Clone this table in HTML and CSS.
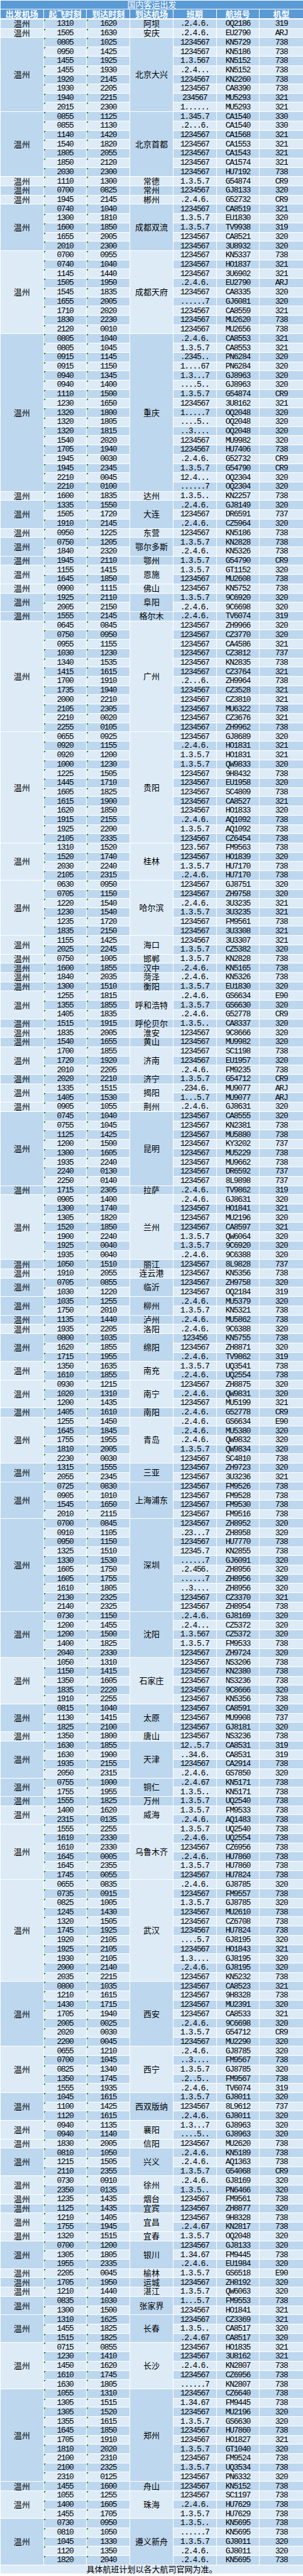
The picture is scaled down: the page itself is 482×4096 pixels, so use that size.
FILE: index.html
```html
<!DOCTYPE html>
<html lang="zh-CN">
<head>
<meta charset="utf-8">
<title>国内客运出发</title>
<link rel="stylesheet" href="styles.css">
</head>
<body>
<table class="sched">
<thead>
<tr class="title-row"><th colspan="7" class="title">国内客运出发</th></tr>
<tr class="head-row"><th>出发机场</th><th>起飞时刻</th><th>到达时刻</th><th>到达机场</th><th>班期</th><th>航班号</th><th>机型</th></tr>
</thead>
<tbody>
<tr class="g"><td>温州</td><td>1310</td><td>1620</td><td>阿坝</td><td>.2.4.6.</td><td>OQ2186</td><td>319</td></tr>
<tr class="g"><td>温州</td><td>1505</td><td>1630</td><td>安庆</td><td>.2.4.6.</td><td>EU2790</td><td>ARJ</td></tr>
<tr class="g"><td rowspan="8">温州</td><td>0805</td><td>1025</td><td rowspan="8">北京大兴</td><td>1234567</td><td>KN5729</td><td>738</td></tr>
<tr><td>0950</td><td>1425</td><td>1234567</td><td>KN5186</td><td>738</td></tr>
<tr><td>1455</td><td>1925</td><td>1.3.567</td><td>KN5152</td><td>738</td></tr>
<tr><td>1455</td><td>1930</td><td>.2.4...</td><td>KN5152</td><td>738</td></tr>
<tr><td>1920</td><td>2145</td><td>1234567</td><td>KN2260</td><td>738</td></tr>
<tr><td>1930</td><td>2205</td><td>1234567</td><td>CA8390</td><td>738</td></tr>
<tr><td>1940</td><td>2215</td><td>234567</td><td>MU5293</td><td>321</td></tr>
<tr><td>2015</td><td>2300</td><td>1......</td><td>MU5293</td><td>321</td></tr>
<tr class="g"><td rowspan="7">温州</td><td>0855</td><td>1125</td><td rowspan="7">北京首都</td><td>1.345.7</td><td>CA1540</td><td>330</td></tr>
<tr><td>0855</td><td>1130</td><td>.2...6.</td><td>CA1540</td><td>330</td></tr>
<tr><td>1140</td><td>1420</td><td>1234567</td><td>CA1568</td><td>321</td></tr>
<tr><td>1540</td><td>1820</td><td>1234567</td><td>CA1553</td><td>321</td></tr>
<tr><td>1805</td><td>2055</td><td>1234567</td><td>CA1543</td><td>321</td></tr>
<tr><td>1850</td><td>2120</td><td>1234567</td><td>CA1574</td><td>321</td></tr>
<tr><td>2030</td><td>2300</td><td>1234567</td><td>HU7192</td><td>738</td></tr>
<tr class="g"><td>温州</td><td>1110</td><td>1300</td><td>常德</td><td>1.3.5.7</td><td>G54874</td><td>CR9</td></tr>
<tr class="g"><td>温州</td><td>0700</td><td>0825</td><td>常州</td><td>1234567</td><td>GJ8133</td><td>320</td></tr>
<tr class="g"><td>温州</td><td>1945</td><td>2145</td><td>郴州</td><td>.2.4.6.</td><td>G52732</td><td>CR9</td></tr>
<tr class="g"><td rowspan="5">温州</td><td>0740</td><td>1040</td><td rowspan="5">成都双流</td><td>1234567</td><td>CA8519</td><td>321</td></tr>
<tr><td>1300</td><td>1810</td><td>1.3.5.7</td><td>EU1830</td><td>320</td></tr>
<tr><td>1600</td><td>1850</td><td>1.3.5.7</td><td>TV9938</td><td>319</td></tr>
<tr><td>1655</td><td>2005</td><td>1234567</td><td>CA8521</td><td>320</td></tr>
<tr><td>2010</td><td>2300</td><td>1234567</td><td>3U8932</td><td>320</td></tr>
<tr class="g"><td rowspan="9">温州</td><td>0700</td><td>0955</td><td rowspan="9">成都天府</td><td>1234567</td><td>KN5337</td><td>738</td></tr>
<tr><td>0740</td><td>1040</td><td>1234567</td><td>HO1837</td><td>321</td></tr>
<tr><td>1145</td><td>1440</td><td>1234567</td><td>3U6902</td><td>321</td></tr>
<tr><td>1505</td><td>1950</td><td>.2.4.6.</td><td>EU2790</td><td>ARJ</td></tr>
<tr><td>1545</td><td>1835</td><td>1234567</td><td>CA8335</td><td>320</td></tr>
<tr><td>1655</td><td>2005</td><td>......7</td><td>GJ6081</td><td>320</td></tr>
<tr><td>1710</td><td>2020</td><td>1234567</td><td>CA8559</td><td>321</td></tr>
<tr><td>1830</td><td>2230</td><td>1234567</td><td>MU2620</td><td>738</td></tr>
<tr><td>2120</td><td>0010</td><td>1234567</td><td>MU2656</td><td>738</td></tr>
<tr class="g"><td rowspan="17">温州</td><td>0805</td><td>1040</td><td rowspan="17">重庆</td><td>.2.4.6.</td><td>CA8553</td><td>321</td></tr>
<tr><td>0805</td><td>1045</td><td>1.3.5.7</td><td>CA8553</td><td>321</td></tr>
<tr><td>0915</td><td>1145</td><td>.2345..</td><td>PN6284</td><td>320</td></tr>
<tr><td>0915</td><td>1150</td><td>1....67</td><td>PN6284</td><td>320</td></tr>
<tr><td>0940</td><td>1345</td><td>1.3...7</td><td>GJ8963</td><td>320</td></tr>
<tr><td>0940</td><td>1400</td><td>....5..</td><td>GJ8963</td><td>320</td></tr>
<tr><td>1110</td><td>1500</td><td>1.3.5.7</td><td>G54874</td><td>CR9</td></tr>
<tr><td>1230</td><td>1650</td><td>1234567</td><td>3U8162</td><td>321</td></tr>
<tr><td>1320</td><td>1800</td><td>1.....7</td><td>OQ2048</td><td>320</td></tr>
<tr><td>1320</td><td>1805</td><td>....5..</td><td>OQ2048</td><td>320</td></tr>
<tr><td>1320</td><td>1815</td><td>..3....</td><td>OQ2048</td><td>320</td></tr>
<tr><td>1540</td><td>2020</td><td>1234567</td><td>MU9982</td><td>320</td></tr>
<tr><td>1705</td><td>1940</td><td>1234567</td><td>HU7406</td><td>738</td></tr>
<tr><td>1945</td><td>0030</td><td>.2.4.6.</td><td>G52732</td><td>CR9</td></tr>
<tr><td>1945</td><td>2345</td><td>1.3.5.7</td><td>G54790</td><td>CR9</td></tr>
<tr><td>2210</td><td>0045</td><td>12.4...</td><td>OQ2304</td><td>320</td></tr>
<tr><td>2210</td><td>0100</td><td>......7</td><td>OQ2304</td><td>320</td></tr>
<tr class="g"><td>温州</td><td>1600</td><td>1835</td><td>达州</td><td>1.3.5..</td><td>KN2257</td><td>738</td></tr>
<tr class="g"><td rowspan="3">温州</td><td>1335</td><td>1550</td><td rowspan="3">大连</td><td>.2.4.6.</td><td>GJ8149</td><td>320</td></tr>
<tr><td>1505</td><td>1720</td><td>1234567</td><td>DR6591</td><td>737</td></tr>
<tr><td>1910</td><td>2145</td><td>.2.4.6.</td><td>CZ5964</td><td>320</td></tr>
<tr class="g"><td>温州</td><td>0950</td><td>1225</td><td>东营</td><td>1234567</td><td>KN5186</td><td>738</td></tr>
<tr class="g"><td rowspan="2">温州</td><td>0750</td><td>1205</td><td rowspan="2">鄂尔多斯</td><td>1.3.5.7</td><td>KN2828</td><td>738</td></tr>
<tr><td>1840</td><td>2320</td><td>.2.4.6.</td><td>KN5326</td><td>738</td></tr>
<tr class="g"><td>温州</td><td>1945</td><td>2110</td><td>鄂州</td><td>1.3.5.7</td><td>G54790</td><td>CR9</td></tr>
<tr class="g"><td rowspan="2">温州</td><td>1155</td><td>1415</td><td rowspan="2">恩施</td><td>1.3.5.7</td><td>GT1152</td><td>320</td></tr>
<tr><td>1645</td><td>1850</td><td>1234567</td><td>MU2608</td><td>738</td></tr>
<tr class="g"><td>温州</td><td>0900</td><td>1115</td><td>佛山</td><td>1234567</td><td>KN5752</td><td>738</td></tr>
<tr class="g"><td rowspan="2">温州</td><td>1925</td><td>2110</td><td rowspan="2">阜阳</td><td>1.3.5.7</td><td>9C6920</td><td>320</td></tr>
<tr><td>2005</td><td>2150</td><td>.2.4.6.</td><td>9C6698</td><td>320</td></tr>
<tr class="g"><td>温州</td><td>1555</td><td>2145</td><td>格尔木</td><td>.2.4.6.</td><td>TV6074</td><td>319</td></tr>
<tr class="g"><td rowspan="12">温州</td><td>0645</td><td>0845</td><td rowspan="12">广州</td><td>1234567</td><td>ZH9966</td><td>320</td></tr>
<tr><td>0750</td><td>0950</td><td>1234567</td><td>CZ3770</td><td>320</td></tr>
<tr><td>0955</td><td>1155</td><td>1234567</td><td>CA4586</td><td>321</td></tr>
<tr><td>1030</td><td>1230</td><td>1234567</td><td>CZ3812</td><td>737</td></tr>
<tr><td>1340</td><td>1535</td><td>1234567</td><td>KN2835</td><td>738</td></tr>
<tr><td>1415</td><td>1615</td><td>1234567</td><td>CZ3764</td><td>321</td></tr>
<tr><td>1700</td><td>1910</td><td>.2...6.</td><td>ZH9964</td><td>738</td></tr>
<tr><td>1735</td><td>1940</td><td>1234567</td><td>CZ3528</td><td>321</td></tr>
<tr><td>2000</td><td>2210</td><td>1234567</td><td>CZ3810</td><td>321</td></tr>
<tr><td>2105</td><td>2305</td><td>1234567</td><td>MU6322</td><td>738</td></tr>
<tr><td>2210</td><td>0020</td><td>1234567</td><td>CZ3676</td><td>321</td></tr>
<tr><td>2255</td><td>0105</td><td>1234567</td><td>ZH9962</td><td>738</td></tr>
<tr class="g"><td rowspan="12">温州</td><td>0655</td><td>0925</td><td rowspan="12">贵阳</td><td>1234567</td><td>GJ8689</td><td>320</td></tr>
<tr><td>0920</td><td>1155</td><td>.2.4.6.</td><td>HO1831</td><td>321</td></tr>
<tr><td>0920</td><td>1200</td><td>1.3.5.7</td><td>HO1831</td><td>321</td></tr>
<tr><td>1000</td><td>1230</td><td>1.3.5.7</td><td>QW9833</td><td>320</td></tr>
<tr><td>1225</td><td>1505</td><td>1234567</td><td>9H8432</td><td>738</td></tr>
<tr><td>1445</td><td>1710</td><td>1234567</td><td>EU1958</td><td>320</td></tr>
<tr><td>1605</td><td>1825</td><td>1234567</td><td>SC4809</td><td>738</td></tr>
<tr><td>1615</td><td>1900</td><td>1234567</td><td>CA8527</td><td>321</td></tr>
<tr><td>1620</td><td>1850</td><td>1234567</td><td>HO1833</td><td>320</td></tr>
<tr><td>1915</td><td>2155</td><td>.2.4.6.</td><td>AQ1092</td><td>738</td></tr>
<tr><td>1925</td><td>2200</td><td>1.3.5.7</td><td>AQ1092</td><td>738</td></tr>
<tr><td>2105</td><td>2335</td><td>1234567</td><td>CZ6454</td><td>738</td></tr>
<tr class="g"><td rowspan="4">温州</td><td>1310</td><td>1520</td><td rowspan="4">桂林</td><td>123.567</td><td>FM9563</td><td>738</td></tr>
<tr><td>1520</td><td>1740</td><td>1234567</td><td>HO1839</td><td>320</td></tr>
<tr><td>2030</td><td>2240</td><td>1.3.5.7</td><td>HU7170</td><td>738</td></tr>
<tr><td>2105</td><td>2315</td><td>.2.4.6.</td><td>HU7170</td><td>738</td></tr>
<tr class="g"><td rowspan="6">温州</td><td>0630</td><td>0950</td><td rowspan="6">哈尔滨</td><td>1234567</td><td>GJ8751</td><td>320</td></tr>
<tr><td>0705</td><td>1150</td><td>1234567</td><td>ZH9758</td><td>320</td></tr>
<tr><td>1220</td><td>1540</td><td>.2.4.6.</td><td>3U3235</td><td>321</td></tr>
<tr><td>1230</td><td>1540</td><td>1.3.5.7</td><td>3U3235</td><td>321</td></tr>
<tr><td>1235</td><td>1720</td><td>1234567</td><td>FM9561</td><td>738</td></tr>
<tr><td>1835</td><td>2150</td><td>1234567</td><td>3U3308</td><td>321</td></tr>
<tr class="g"><td rowspan="2">温州</td><td>1155</td><td>1425</td><td rowspan="2">海口</td><td>1234567</td><td>3U3307</td><td>321</td></tr>
<tr><td>2025</td><td>2245</td><td>1.3.5.7</td><td>CZ5382</td><td>320</td></tr>
<tr class="g"><td>温州</td><td>0750</td><td>1005</td><td>邯郸</td><td>1.3.5.7</td><td>KN2828</td><td>738</td></tr>
<tr class="g"><td>温州</td><td>1600</td><td>1855</td><td>汉中</td><td>.2.4.6.</td><td>KN5165</td><td>738</td></tr>
<tr class="g"><td>温州</td><td>1840</td><td>2035</td><td>菏泽</td><td>.2.4.6.</td><td>KN5326</td><td>738</td></tr>
<tr class="g"><td>温州</td><td>1300</td><td>1510</td><td>衡阳</td><td>1.3.5.7</td><td>EU1830</td><td>320</td></tr>
<tr class="g"><td rowspan="3">温州</td><td>1255</td><td>1815</td><td rowspan="3">呼和浩特</td><td>.2.4.6.</td><td>GS6634</td><td>E90</td></tr>
<tr><td>1355</td><td>1855</td><td>1.3.5.7</td><td>GS6630</td><td>320</td></tr>
<tr><td>1405</td><td>1835</td><td>.2.4.6.</td><td>G52778</td><td>CR9</td></tr>
<tr class="g"><td>温州</td><td>1515</td><td>1915</td><td>呼伦贝尔</td><td>1.3.5..</td><td>CA8337</td><td>320</td></tr>
<tr class="g"><td>温州</td><td>1835</td><td>2005</td><td>淮安</td><td>1234567</td><td>9C8666</td><td>320</td></tr>
<tr class="g"><td>温州</td><td>1540</td><td>1655</td><td>黄山</td><td>1234567</td><td>MU9982</td><td>320</td></tr>
<tr class="g"><td rowspan="3">温州</td><td>1700</td><td>1855</td><td rowspan="3">济南</td><td>1234567</td><td>SC1198</td><td>738</td></tr>
<tr><td>1720</td><td>1920</td><td>1234567</td><td>EU1957</td><td>320</td></tr>
<tr><td>2010</td><td>2205</td><td>.2.4.6.</td><td>FM9235</td><td>738</td></tr>
<tr class="g"><td>温州</td><td>2020</td><td>2210</td><td>济宁</td><td>1.3.5.7</td><td>G54712</td><td>CR9</td></tr>
<tr class="g"><td rowspan="2">温州</td><td>1335</td><td>1515</td><td rowspan="2">揭阳</td><td>.234.6.</td><td>MU9077</td><td>ARJ</td></tr>
<tr><td>1405</td><td>1530</td><td>1...5.7</td><td>MU9077</td><td>ARJ</td></tr>
<tr class="g"><td>温州</td><td>0905</td><td>1055</td><td>荆州</td><td>.2.4.6.</td><td>GJ8631</td><td>320</td></tr>
<tr class="g"><td rowspan="8">温州</td><td>0745</td><td>1040</td><td rowspan="8">昆明</td><td>1234567</td><td>CA8555</td><td>320</td></tr>
<tr><td>0755</td><td>1045</td><td>1234567</td><td>KN2381</td><td>738</td></tr>
<tr><td>1125</td><td>1425</td><td>1234567</td><td>MU5880</td><td>738</td></tr>
<tr><td>1200</td><td>1500</td><td>1234567</td><td>KY3202</td><td>737</td></tr>
<tr><td>1300</td><td>1605</td><td>1234567</td><td>MU5229</td><td>738</td></tr>
<tr><td>1935</td><td>2240</td><td>1234567</td><td>MU9662</td><td>738</td></tr>
<tr><td>2240</td><td>0130</td><td>1234567</td><td>DR6592</td><td>737</td></tr>
<tr><td>2250</td><td>0140</td><td>1234567</td><td>8L9898</td><td>737</td></tr>
<tr class="g"><td>温州</td><td>1715</td><td>2305</td><td>拉萨</td><td>.2.4.6.</td><td>TV9862</td><td>319</td></tr>
<tr class="g"><td rowspan="7">温州</td><td>0905</td><td>1400</td><td rowspan="7">兰州</td><td>.2.4.6.</td><td>GJ8631</td><td>320</td></tr>
<tr><td>1300</td><td>1740</td><td>1234567</td><td>HO1841</td><td>321</td></tr>
<tr><td>1305</td><td>1820</td><td>1234567</td><td>MU2196</td><td>320</td></tr>
<tr><td>1520</td><td>1850</td><td>1234567</td><td>CA8597</td><td>321</td></tr>
<tr><td>1900</td><td>2240</td><td>1.3.5.7</td><td>QW6064</td><td>320</td></tr>
<tr><td>1925</td><td>0040</td><td>1.3.5.7</td><td>9C6920</td><td>320</td></tr>
<tr><td>1935</td><td>0040</td><td>.2.4.6.</td><td>9C6388</td><td>320</td></tr>
<tr class="g"><td>温州</td><td>1050</td><td>1510</td><td>丽江</td><td>1234567</td><td>8L9828</td><td>737</td></tr>
<tr class="g"><td>温州</td><td>1910</td><td>2055</td><td>连云港</td><td>1234567</td><td>KN5356</td><td>738</td></tr>
<tr class="g"><td rowspan="2">温州</td><td>0705</td><td>0855</td><td rowspan="2">临沂</td><td>1234567</td><td>ZH9758</td><td>320</td></tr>
<tr><td>1030</td><td>1220</td><td>1234567</td><td>OQ2184</td><td>319</td></tr>
<tr class="g"><td rowspan="2">温州</td><td>1035</td><td>1255</td><td rowspan="2">柳州</td><td>.2.4.6.</td><td>MU5379</td><td>320</td></tr>
<tr><td>1750</td><td>2010</td><td>1.3.5.7</td><td>KN5321</td><td>738</td></tr>
<tr class="g"><td>温州</td><td>1135</td><td>1440</td><td>泸州</td><td>.2.4.6.</td><td>MU5862</td><td>738</td></tr>
<tr class="g"><td>温州</td><td>1935</td><td>2205</td><td>洛阳</td><td>.2.4.6.</td><td>9C6388</td><td>320</td></tr>
<tr class="g"><td rowspan="3">温州</td><td>0800</td><td>1035</td><td rowspan="3">绵阳</td><td>123456</td><td>KN5755</td><td>738</td></tr>
<tr><td>1620</td><td>1855</td><td>1234567</td><td>ZH8871</td><td>320</td></tr>
<tr><td>1715</td><td>1955</td><td>.2.4.6.</td><td>TV9862</td><td>319</td></tr>
<tr class="g"><td rowspan="2">温州</td><td>1350</td><td>1635</td><td rowspan="2">南充</td><td>1.3.5.7</td><td>UQ3541</td><td>738</td></tr>
<tr><td>1610</td><td>1855</td><td>.2.4.6.</td><td>UQ2554</td><td>738</td></tr>
<tr class="g"><td rowspan="3">温州</td><td>0930</td><td>1215</td><td rowspan="3">南宁</td><td>1234567</td><td>ZH8875</td><td>320</td></tr>
<tr><td>1020</td><td>1310</td><td>.2.4.6.</td><td>QW9831</td><td>320</td></tr>
<tr><td>1200</td><td>1435</td><td>1234567</td><td>MU5199</td><td>321</td></tr>
<tr class="g"><td>温州</td><td>1405</td><td>1610</td><td>南阳</td><td>.2.4.6.</td><td>G52778</td><td>CR9</td></tr>
<tr class="g"><td rowspan="5">温州</td><td>1255</td><td>1450</td><td rowspan="5">青岛</td><td>.2.4.6.</td><td>GS6634</td><td>E90</td></tr>
<tr><td>1645</td><td>1845</td><td>.2.4.6.</td><td>MU5380</td><td>320</td></tr>
<tr><td>1755</td><td>1955</td><td>.2.4.6.</td><td>QW9832</td><td>320</td></tr>
<tr><td>1810</td><td>2005</td><td>1.3.5.7</td><td>QW9834</td><td>320</td></tr>
<tr><td>2230</td><td>0030</td><td>1234567</td><td>SC4810</td><td>738</td></tr>
<tr class="g"><td rowspan="2">温州</td><td>1315</td><td>1555</td><td rowspan="2">三亚</td><td>1234567</td><td>ZH9723</td><td>320</td></tr>
<tr><td>2055</td><td>2345</td><td>1234567</td><td>3U3236</td><td>321</td></tr>
<tr class="g"><td rowspan="4">温州</td><td>0725</td><td>0830</td><td rowspan="4">上海浦东</td><td>1234567</td><td>FM9526</td><td>738</td></tr>
<tr><td>0905</td><td>1010</td><td>1234567</td><td>FM9528</td><td>738</td></tr>
<tr><td>1545</td><td>1650</td><td>1234567</td><td>FM9530</td><td>738</td></tr>
<tr><td>2010</td><td>2115</td><td>1234567</td><td>FM9516</td><td>738</td></tr>
<tr class="g"><td rowspan="10">温州</td><td>0700</td><td>0845</td><td rowspan="10">深圳</td><td>1234567</td><td>ZH8952</td><td>320</td></tr>
<tr><td>0910</td><td>1105</td><td>.23...7</td><td>ZH8958</td><td>320</td></tr>
<tr><td>0950</td><td>1150</td><td>1234567</td><td>HU7770</td><td>738</td></tr>
<tr><td>1325</td><td>1510</td><td>12345.7</td><td>KN2855</td><td>738</td></tr>
<tr><td>1330</td><td>1530</td><td>......7</td><td>GJ6091</td><td>320</td></tr>
<tr><td>1605</td><td>1750</td><td>.2.456.</td><td>ZH8956</td><td>320</td></tr>
<tr><td>1605</td><td>1755</td><td>......7</td><td>ZH8956</td><td>320</td></tr>
<tr><td>1610</td><td>1805</td><td>..3....</td><td>ZH8956</td><td>320</td></tr>
<tr><td>2130</td><td>2325</td><td>1234567</td><td>CZ3370</td><td>321</td></tr>
<tr><td>2140</td><td>2325</td><td>1234567</td><td>ZH8954</td><td>738</td></tr>
<tr class="g"><td rowspan="5">温州</td><td>0730</td><td>1150</td><td rowspan="5">沈阳</td><td>.2.4.6.</td><td>GJ8169</td><td>320</td></tr>
<tr><td>1200</td><td>1455</td><td>.2.4...</td><td>CZ5372</td><td>320</td></tr>
<tr><td>1200</td><td>1500</td><td>1.3.567</td><td>CZ5372</td><td>320</td></tr>
<tr><td>1400</td><td>1825</td><td>1.3.5.7</td><td>FM9533</td><td>738</td></tr>
<tr><td>2040</td><td>2330</td><td>1234567</td><td>ZH9724</td><td>320</td></tr>
<tr class="g"><td rowspan="5">温州</td><td>1050</td><td>1310</td><td rowspan="5">石家庄</td><td>1234567</td><td>NS3206</td><td>738</td></tr>
<tr><td>1150</td><td>1415</td><td>1234567</td><td>KN2380</td><td>738</td></tr>
<tr><td>1350</td><td>1605</td><td>1234567</td><td>NS3236</td><td>738</td></tr>
<tr><td>1835</td><td>2220</td><td>1234567</td><td>9C8666</td><td>320</td></tr>
<tr><td>1910</td><td>2255</td><td>1234567</td><td>KN5356</td><td>738</td></tr>
<tr class="g"><td rowspan="3">温州</td><td>0815</td><td>1040</td><td rowspan="3">太原</td><td>1234567</td><td>CA8591</td><td>320</td></tr>
<tr><td>1130</td><td>1415</td><td>1234567</td><td>MU9908</td><td>737</td></tr>
<tr><td>1825</td><td>2100</td><td>1234567</td><td>GJ8181</td><td>320</td></tr>
<tr class="g"><td>温州</td><td>1350</td><td>1800</td><td>唐山</td><td>1234567</td><td>NS3236</td><td>738</td></tr>
<tr class="g"><td rowspan="4">温州</td><td>1630</td><td>1855</td><td rowspan="4">天津</td><td>12..5.7</td><td>CA8531</td><td>319</td></tr>
<tr><td>1630</td><td>1900</td><td>..34.6.</td><td>CA8531</td><td>319</td></tr>
<tr><td>1935</td><td>2155</td><td>1234567</td><td>CA2914</td><td>738</td></tr>
<tr><td>2050</td><td>2315</td><td>.2.4.6.</td><td>GS7850</td><td>320</td></tr>
<tr class="g"><td rowspan="2">温州</td><td>0755</td><td>1000</td><td rowspan="2">铜仁</td><td>.2.4.67</td><td>KN5171</td><td>738</td></tr>
<tr><td>1755</td><td>1955</td><td>1.3.5..</td><td>KN5171</td><td>738</td></tr>
<tr class="g"><td>温州</td><td>1555</td><td>1825</td><td>万州</td><td>1.3.5.7</td><td>UQ2540</td><td>738</td></tr>
<tr class="g"><td rowspan="2">温州</td><td>1400</td><td>1620</td><td rowspan="2">威海</td><td>1.3.5.7</td><td>FM9533</td><td>738</td></tr>
<tr><td>2315</td><td>0135</td><td>.2.4.6.</td><td>AQ1483</td><td>738</td></tr>
<tr class="g"><td rowspan="6">温州</td><td>1555</td><td>2255</td><td rowspan="6">乌鲁木齐</td><td>1.3.5.7</td><td>UQ2540</td><td>738</td></tr>
<tr><td>1610</td><td>2330</td><td>.2.4.6.</td><td>UQ2554</td><td>738</td></tr>
<tr><td>1610</td><td>2330</td><td>1234567</td><td>CZ6956</td><td>738</td></tr>
<tr><td>1645</td><td>0005</td><td>.2.4.6.</td><td>HU7860</td><td>738</td></tr>
<tr><td>1645</td><td>2355</td><td>1.3.5.7</td><td>HU7860</td><td>738</td></tr>
<tr><td>1745</td><td>0055</td><td>1234567</td><td>HU7824</td><td>738</td></tr>
<tr class="g"><td rowspan="11">温州</td><td>0655</td><td>0835</td><td rowspan="11">武汉</td><td>.2.4.6.</td><td>GJ8785</td><td>320</td></tr>
<tr><td>0735</td><td>0915</td><td>1234567</td><td>FM9557</td><td>738</td></tr>
<tr><td>0825</td><td>1005</td><td>1.3.5.7</td><td>GJ8785</td><td>320</td></tr>
<tr><td>1245</td><td>1430</td><td>1234567</td><td>MU2610</td><td>738</td></tr>
<tr><td>1320</td><td>1505</td><td>1234567</td><td>CZ6708</td><td>738</td></tr>
<tr><td>1745</td><td>1925</td><td>1234567</td><td>HU7824</td><td>738</td></tr>
<tr><td>1920</td><td>2105</td><td>....5.7</td><td>GJ8195</td><td>320</td></tr>
<tr><td>1925</td><td>2105</td><td>1234567</td><td>HO1843</td><td>321</td></tr>
<tr><td>1930</td><td>2105</td><td>1.3....</td><td>GJ8195</td><td>320</td></tr>
<tr><td>2000</td><td>2140</td><td>.2.4.6.</td><td>GJ8195</td><td>320</td></tr>
<tr><td>2035</td><td>2215</td><td>1234567</td><td>KN5232</td><td>738</td></tr>
<tr class="g"><td rowspan="7">温州</td><td>0800</td><td>1035</td><td rowspan="7">西安</td><td>1234567</td><td>CA8523</td><td>321</td></tr>
<tr><td>1210</td><td>1615</td><td>1234567</td><td>9H8328</td><td>738</td></tr>
<tr><td>1430</td><td>1715</td><td>1234567</td><td>MU2391</td><td>320</td></tr>
<tr><td>1705</td><td>1940</td><td>1234567</td><td>CA8533</td><td>321</td></tr>
<tr><td>2005</td><td>0025</td><td>.2.4.6.</td><td>9C6698</td><td>320</td></tr>
<tr><td>2020</td><td>0030</td><td>1.3.5.7</td><td>G54712</td><td>CR9</td></tr>
<tr><td>2200</td><td>0045</td><td>1234567</td><td>MU2290</td><td>320</td></tr>
<tr class="g"><td rowspan="5">温州</td><td>0655</td><td>1210</td><td rowspan="5">西宁</td><td>.2.4.6.</td><td>GJ8785</td><td>320</td></tr>
<tr><td>0700</td><td>1045</td><td>..3....</td><td>FM9567</td><td>738</td></tr>
<tr><td>0825</td><td>1340</td><td>1.3.5.7</td><td>GJ8785</td><td>320</td></tr>
<tr><td>1350</td><td>1745</td><td>.2..5..</td><td>FM9567</td><td>738</td></tr>
<tr><td>1555</td><td>1935</td><td>.2.4.6.</td><td>TV6074</td><td>319</td></tr>
<tr class="g"><td rowspan="3">温州</td><td>1045</td><td>1615</td><td rowspan="3">西双版纳</td><td>1.3.5.7</td><td>GJ8011</td><td>320</td></tr>
<tr><td>1100</td><td>1425</td><td>1234567</td><td>8L9612</td><td>737</td></tr>
<tr><td>1120</td><td>1615</td><td>.2.4.6.</td><td>GJ8011</td><td>320</td></tr>
<tr class="g"><td rowspan="2">温州</td><td>0940</td><td>1135</td><td rowspan="2">襄阳</td><td>1.3...7</td><td>GJ8963</td><td>320</td></tr>
<tr><td>0940</td><td>1140</td><td>....5..</td><td>GJ8963</td><td>320</td></tr>
<tr class="g"><td>温州</td><td>1830</td><td>2005</td><td>信阳</td><td>1234567</td><td>MU2620</td><td>738</td></tr>
<tr class="g"><td rowspan="3">温州</td><td>0810</td><td>1050</td><td rowspan="3">兴义</td><td>.2.4.6.</td><td>KN5189</td><td>738</td></tr>
<tr><td>1215</td><td>1505</td><td>.2.4.6.</td><td>AQ1363</td><td>738</td></tr>
<tr><td>2110</td><td>2355</td><td>1.3.5.7</td><td>G54068</td><td>CR9</td></tr>
<tr class="g"><td rowspan="2">温州</td><td>0730</td><td>0910</td><td rowspan="2">徐州</td><td>.2.4.6.</td><td>GJ8169</td><td>320</td></tr>
<tr><td>2350</td><td>0135</td><td>1.3.5..</td><td>PN6466</td><td>320</td></tr>
<tr class="g"><td>温州</td><td>1235</td><td>1435</td><td>烟台</td><td>1234567</td><td>FM9561</td><td>738</td></tr>
<tr class="g"><td>温州</td><td>1125</td><td>1435</td><td>宜宾</td><td>1234567</td><td>ZH8877</td><td>320</td></tr>
<tr class="g"><td rowspan="2">温州</td><td>1210</td><td>1405</td><td rowspan="2">宜昌</td><td>1234567</td><td>9H8328</td><td>738</td></tr>
<tr><td>1755</td><td>1945</td><td>.2.4.67</td><td>KN2817</td><td>738</td></tr>
<tr class="g"><td>温州</td><td>1320</td><td>1515</td><td>宜春</td><td>1.3.5.7</td><td>OQ2048</td><td>320</td></tr>
<tr class="g"><td rowspan="3">温州</td><td>0700</td><td>1200</td><td rowspan="3">银川</td><td>1234567</td><td>GJ8133</td><td>320</td></tr>
<tr><td>1305</td><td>1805</td><td>1.34.67</td><td>FM9445</td><td>738</td></tr>
<tr><td>1955</td><td>2335</td><td>.2.4.6.</td><td>EU1984</td><td>320</td></tr>
<tr class="g"><td>温州</td><td>2205</td><td>0045</td><td>榆林</td><td>1.3.5.7</td><td>GS6518</td><td>E90</td></tr>
<tr class="g"><td>温州</td><td>1705</td><td>1950</td><td>运城</td><td>1234567</td><td>ZH8192</td><td>320</td></tr>
<tr class="g"><td>温州</td><td>1210</td><td>1440</td><td>湛江</td><td>1.3.5.7</td><td>QW6063</td><td>320</td></tr>
<tr class="g"><td rowspan="2">温州</td><td>0835</td><td>1030</td><td rowspan="2">张家界</td><td>1...5.7</td><td>FM9553</td><td>738</td></tr>
<tr><td>1300</td><td>1500</td><td>1234567</td><td>HO1841</td><td>321</td></tr>
<tr class="g"><td rowspan="3">温州</td><td>1310</td><td>1625</td><td rowspan="3">长春</td><td>1234567</td><td>CZ3369</td><td>321</td></tr>
<tr><td>1455</td><td>1825</td><td>1.3.5..</td><td>CA8517</td><td>320</td></tr>
<tr><td>1515</td><td>1825</td><td>.2.4.67</td><td>CA8517</td><td>320</td></tr>
<tr class="g"><td rowspan="5">温州</td><td>0715</td><td>0855</td><td rowspan="5">长沙</td><td>1234567</td><td>HO1835</td><td>321</td></tr>
<tr><td>1230</td><td>1410</td><td>1234567</td><td>3U8162</td><td>321</td></tr>
<tr><td>1450</td><td>1620</td><td>.2.4.6.</td><td>KN2807</td><td>738</td></tr>
<tr><td>1610</td><td>1745</td><td>1234567</td><td>CZ6956</td><td>738</td></tr>
<tr><td>1630</td><td>1805</td><td>......7</td><td>KN2807</td><td>738</td></tr>
<tr class="g"><td rowspan="10">温州</td><td>1055</td><td>1310</td><td rowspan="10">郑州</td><td>1234567</td><td>CZ6640</td><td>738</td></tr>
<tr><td>1305</td><td>1515</td><td>1.34.67</td><td>FM9445</td><td>738</td></tr>
<tr><td>1305</td><td>1520</td><td>1234567</td><td>MU2196</td><td>320</td></tr>
<tr><td>1355</td><td>1615</td><td>1.3.5.7</td><td>GS6630</td><td>320</td></tr>
<tr><td>1645</td><td>1850</td><td>1234567</td><td>HU7860</td><td>738</td></tr>
<tr><td>1705</td><td>1910</td><td>1234567</td><td>HO1827</td><td>321</td></tr>
<tr><td>1810</td><td>2020</td><td>1.3.5.7</td><td>GT1040</td><td>320</td></tr>
<tr><td>2100</td><td>2310</td><td>1234567</td><td>FM9524</td><td>738</td></tr>
<tr><td>2100</td><td>2325</td><td>1.3.5.7</td><td>UQ3534</td><td>738</td></tr>
<tr><td>2310</td><td>0125</td><td>1234567</td><td>PN6332</td><td>320</td></tr>
<tr class="g"><td>温州</td><td>1455</td><td>1600</td><td>舟山</td><td>1234567</td><td>KN5152</td><td>738</td></tr>
<tr class="g"><td rowspan="3">温州</td><td>1055</td><td>1255</td><td rowspan="3">珠海</td><td>1234567</td><td>SC1197</td><td>738</td></tr>
<tr><td>1400</td><td>1605</td><td>.2.4.6.</td><td>HU7629</td><td>738</td></tr>
<tr><td>1455</td><td>1705</td><td>1.3.5.7</td><td>HU7629</td><td>738</td></tr>
<tr class="g"><td rowspan="5">温州</td><td>0730</td><td>0950</td><td rowspan="5">遵义新舟</td><td>1.3.5..</td><td>KN5695</td><td>738</td></tr>
<tr><td>0810</td><td>1050</td><td>......7</td><td>KN5695</td><td>738</td></tr>
<tr><td>1045</td><td>1330</td><td>1.3.5.7</td><td>GJ8011</td><td>320</td></tr>
<tr><td>1120</td><td>1350</td><td>.2.4.6.</td><td>GJ8011</td><td>320</td></tr>
<tr><td>1820</td><td>2040</td><td>.2.4.6.</td><td>KN5695</td><td>738</td></tr>
<tr class="note"><td colspan="7">具体航班计划以各大航司官网为准。</td></tr>
</tbody>
</table>
</body>
</html>
```

FILE: styles.css
```css
html, body {
  margin: 0;
  padding: 0;
  background: #ffffff;
}

.sched {
  width: 482px;
  table-layout: fixed;
  border-collapse: separate;
  border-spacing: 0;
  border-top: 1px solid #ffffff;
  border-left: 1px solid #ffffff;
}

/* ---------- header ---------- */
.sched .title-row { height: 14px; }
.sched .head-row { height: 16px; }

.sched th {
  padding: 0;
  background: #5b9bd5;
  color: #ffffff;
  text-align: center;
  vertical-align: middle;
  font-family: "Liberation Sans", "Noto Sans CJK SC", sans-serif;
  font-size: 13px;
  line-height: 13px;
  border-right: 1px solid #ffffff;
  border-bottom: 1px solid #ffffff;
  white-space: nowrap;
}

.sched .title {
  font-weight: 400;
  border-right: 0;
}

.sched .head-row th {
  font-weight: 700;
  border-bottom: 2px solid #ffffff;
}

.sched .head-row th:last-child { border-right: 0; }

/* ---------- body ---------- */
.sched tbody tr { height: 14.72px; }

.sched td {
  padding: 0;
  text-align: center;
  vertical-align: middle;
  color: #000000;
  font-family: "Liberation Mono", monospace;
  font-size: 13px;
  line-height: 13px;
  letter-spacing: -1.25px;
  border-right: 1px solid #ffffff;
  border-bottom: 1px solid #ffffff;
  white-space: nowrap;
}

.sched td:last-child { border-right: 0; }

.sched tbody tr:nth-child(odd) td { background: #bdd7ee; }
.sched tbody tr:nth-child(even) td { background: #ddebf7; }

/* airport names (first and fourth cell of a group's first row) and the note */
.sched tr.g > td:nth-child(1),
.sched tr.g > td:nth-child(4),
.sched tr.note > td {
  font-family: "Liberation Sans", "Noto Sans CJK SC", sans-serif;
  font-size: 13px;
  letter-spacing: 0;
}

/* green "number stored as text" markers on the time cells */
.sched tr.g > td:nth-child(2),
.sched tr.g > td:nth-child(3),
.sched tbody tr:not(.g):not(.note) > td:nth-child(1),
.sched tbody tr:not(.g):not(.note) > td:nth-child(2) {
  position: relative;
}

.sched tr.g > td:nth-child(2)::before,
.sched tr.g > td:nth-child(3)::before,
.sched tbody tr:not(.g):not(.note) > td:nth-child(1)::before,
.sched tbody tr:not(.g):not(.note) > td:nth-child(2)::before {
  content: "";
  position: absolute;
  left: 0;
  top: 0;
  width: 0;
  height: 0;
  border-top: 3px solid #138a13;
  border-right: 3px solid transparent;
}
```
